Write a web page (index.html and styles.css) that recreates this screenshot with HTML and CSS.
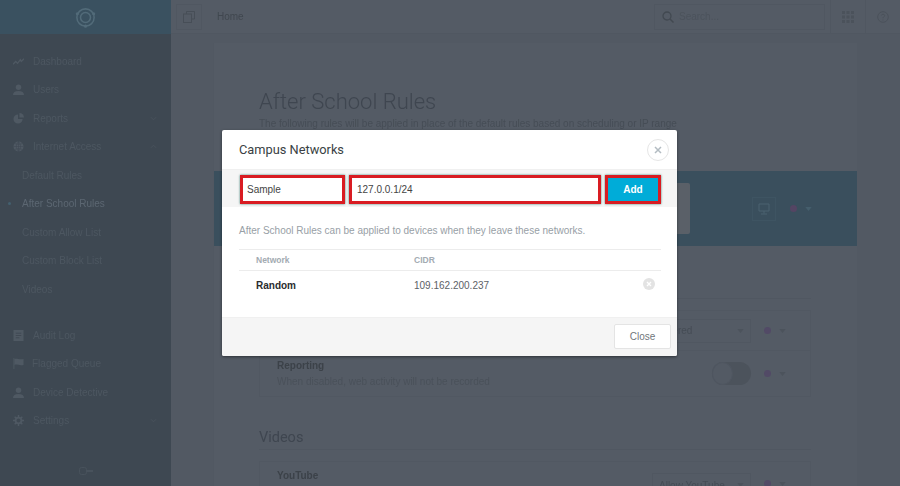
FILE: index.html
```html
<!DOCTYPE html>
<html lang="en">
<head>
<meta charset="utf-8">
<title>Campus Networks</title>
<link rel="stylesheet" href="styles.css">
</head>
<body>
<div class="app">
  <aside class="sidebar">
    <div class="brand">
      <svg class="logo" viewBox="0 0 24 24" width="23" height="23"><circle cx="12" cy="12" r="9" fill="none" stroke="#526b79" stroke-width="1.600"/><circle cx="12" cy="12" r="5.200" fill="none" stroke="#526b79" stroke-width="1.600"/><circle cx="3.500" cy="8" r="1.600" fill="#526b79"/><circle cx="20.500" cy="8" r="1.600" fill="#526b79"/><circle cx="12" cy="21" r="1.600" fill="#526b79"/></svg>
    </div>
    <nav class="nav">
      <a class="nav-row"><svg class="nav-icon" viewBox="0 0 12 12"><path d="M0 9l3-3 2 2 3-4 1 2 3-3" fill="none" stroke="#4f5963" stroke-width="1.400"/></svg>Dashboard</a>
      <a class="nav-row"><svg class="nav-icon" viewBox="0 0 12 12"><circle cx="6" cy="3.500" r="3" fill="#4f5963"/><path d="M0 12c0-3 2-4.500 6-4.500s6 1.500 6 4.500z" fill="#4f5963"/></svg>Users</a>
      <a class="nav-row"><svg class="nav-icon" viewBox="0 0 12 12"><path d="M5.500 1.500a5 5 0 1 0 5 5h-5z" fill="#4f5963"/><path d="M7 0a5 5 0 0 1 5 5H7z" fill="#4f5963"/></svg>Reports<svg class="chev" viewBox="0 0 8 5"><path d="M1 1l3 3 3-3" fill="none" stroke="#4a545e"/></svg></a>
      <a class="nav-row"><svg class="nav-icon" viewBox="0 0 12 12"><circle cx="6" cy="6" r="5.500" fill="#4f5963"/><path d="M0.500 6h11M6 .5v11M2 2.800c2.500 1 5.500 1 8 0M2 9.200c2.500-1 5.500-1 8 0M6 .5C3 4 3 8 6 11.500 9 8 9 4 6 .5" fill="none" stroke="#3e4852" stroke-width=".6"/></svg>Internet Access<svg class="chev" viewBox="0 0 8 5"><path d="M1 4l3-3 3 3" fill="none" stroke="#4a545e"/></svg></a>
      <a class="nav-row sub">Default Rules</a>
      <a class="nav-row sub active"><span class="bullet"></span>After School Rules</a>
      <a class="nav-row sub">Custom Allow List</a>
      <a class="nav-row sub">Custom Block List</a>
      <a class="nav-row sub">Videos</a>
      <a class="nav-row spaced"><svg class="nav-icon" viewBox="0 0 12 12"><path d="M.5 0h11v12H.5z" fill="#4f5963"/><path d="M3 3.500h6M3 6h6M3 8.500h4" stroke="#3e4852"/></svg>Audit Log</a>
      <a class="nav-row"><svg class="nav-icon flag" viewBox="0 0 12 12"><path d="M1 0v12" stroke="#4f5963"/><path d="M1.500 1c3-1 5 1 10 0v6.500c-5 1-7-1-10 0z" fill="#4f5963"/></svg>Flagged Queue</a>
      <a class="nav-row"><svg class="nav-icon" viewBox="0 0 12 12"><circle cx="6" cy="3.500" r="3" fill="#4f5963"/><path d="M0 12c0-3 2-4.500 6-4.500s6 1.500 6 4.500z" fill="#4f5963"/></svg>Device Detective</a>
      <a class="nav-row"><svg class="nav-icon" viewBox="0 0 12 12"><circle cx="6" cy="6" r="3.200" fill="none" stroke="#4f5963" stroke-width="2"/><path d="M6 0v2.500M6 9.500V12M0 6h2.500M9.500 6H12M1.800 1.800l1.800 1.800M8.400 8.400l1.800 1.800M1.800 10.200l1.800-1.800M8.400 3.600l1.800-1.800" stroke="#4f5963" stroke-width="1.600"/></svg>Settings<svg class="chev" viewBox="0 0 8 5"><path d="M1 1l3 3 3-3" fill="none" stroke="#4a545e"/></svg></a>
    </nav>
    <div class="side-foot"><svg viewBox="0 0 14 8" width="14" height="8"><rect x=".5" y=".5" width="7" height="7" rx="2" fill="none" stroke="#48525c"/><rect x="7" y="3" width="7" height="2" fill="#48525c"/></svg></div>
  </aside>
  <div class="main">
    <header class="topbar">
      <div class="square-btn"><svg viewBox="0 0 12 12" width="12" height="12"><rect x=".5" y="3" width="8" height="8.500" fill="none" stroke="#474e57"/><path d="M3.500 3V.5h8V8H9" fill="none" stroke="#474e57"/></svg></div>
      <span class="crumb">Home</span>
      <div class="search"><svg viewBox="0 0 12 12" width="12" height="12"><circle cx="5" cy="5" r="4" fill="none" stroke="#424951" stroke-width="1.300"/><path d="M8 8l3.500 3.500" stroke="#424951" stroke-width="1.500"/></svg><span>Search...</span></div>
      <div class="top-icon"><svg viewBox="0 0 12 12" width="12" height="12"><g fill="#4b525b"><rect width="3" height="3"/><rect x="4.500" width="3" height="3"/><rect x="9" width="3" height="3"/><rect y="4.500" width="3" height="3"/><rect x="4.500" y="4.500" width="3" height="3"/><rect x="9" y="4.500" width="3" height="3"/><rect y="9" width="3" height="3"/><rect x="4.500" y="9" width="3" height="3"/><rect x="9" y="9" width="3" height="3"/></g></svg></div>
      <div class="top-icon"><svg viewBox="0 0 12 12" width="12" height="12"><circle cx="6" cy="6" r="5.300" fill="none" stroke="#4b525b"/><path d="M4.300 4.500C4.500 2.800 7.700 2.800 7.700 4.600 7.700 5.800 6 5.800 6 7.300M6 8.500v1" fill="none" stroke="#4b525b"/></svg></div>
    </header>
    <main class="card">
      <div class="card-head">
        <h1>After School Rules</h1>
        <p>The following rules will be applied in place of the default rules based on scheduling or IP range</p>
      </div>
      <section class="band">
        <div class="band-box"></div>
        <div class="band-controls">
          <div class="monitor"><svg viewBox="0 0 12 12" width="12" height="12"><path d="M1 1h10v7H1zM6 8v2.500M3 11h6" fill="none" stroke="#4a6371"/></svg></div>
          <span class="dot"></span>
          <svg class="caret" viewBox="0 0 8 5"><path d="M0 0h8L4 5z" fill="#455e6c"/></svg>
        </div>
      </section>
      <section class="rules">
        <div class="section-rule"></div>
        <div class="panel">
          <div class="rule rule-filter">
            <div class="select">Filtered<svg class="caret" viewBox="0 0 8 5"><path d="M0 0h8L4 5z" fill="#4c535c"/></svg></div>
            <span class="dot"></span>
            <svg class="caret" viewBox="0 0 8 5"><path d="M0 0h8L4 5z" fill="#4c535c"/></svg>
          </div>
          <div class="rule rule-report">
            <div class="rule-text"><h3>Reporting</h3><p>When disabled, web activity will not be recorded</p></div>
            <div class="toggle"><span></span></div>
            <span class="dot"></span>
            <svg class="caret" viewBox="0 0 8 5"><path d="M0 0h8L4 5z" fill="#4c535c"/></svg>
          </div>
        </div>
        <h2>Videos</h2>
        <div class="panel">
          <div class="rule rule-video">
            <div class="rule-text"><h3>YouTube</h3></div>
            <div class="select">Allow YouTube<svg class="caret" viewBox="0 0 8 5"><path d="M0 0h8L4 5z" fill="#4c535c"/></svg></div>
            <span class="dot"></span>
            <svg class="caret" viewBox="0 0 8 5"><path d="M0 0h8L4 5z" fill="#4c535c"/></svg>
          </div>
        </div>
      </section>
    </main>
  </div>
</div>

<div class="modal">
  <div class="modal-head">
    <h4>Campus Networks</h4>
    <button class="modal-x" type="button"><svg viewBox="0 0 8 8" width="8" height="8"><path d="M1 1l6 6M7 1L1 7" stroke="#b3bcc2" stroke-width="1.500"/></svg></button>
  </div>
  <form class="modal-form">
    <input class="field name" value="Sample">
    <input class="field cidr" value="127.0.0.1/24">
    <button class="add" type="button">Add</button>
  </form>
  <div class="modal-body">
    <p class="hint">After School Rules can be applied to devices when they leave these networks.</p>
    <div class="table">
      <div class="t-row t-head"><span class="c1">Network</span><span class="c2">CIDR</span></div>
      <div class="t-row t-data"><span class="c1 strong">Random</span><span class="c2">109.162.200.237</span><svg class="remove" viewBox="0 0 12 12" width="12" height="12"><circle cx="6" cy="6" r="6" fill="#e3e3e3"/><path d="M4 4l4 4M8 4l-4 4" stroke="#fff" stroke-width="1.300"/></svg></div>
    </div>
  </div>
  <div class="modal-foot"><button class="close" type="button">Close</button></div>
</div>
</body>
</html>
```
FILE: styles.css
```css
* { box-sizing: border-box; }
html, body { margin: 0; height: 486px; overflow: hidden; }
body { font-family: "Liberation Sans", Arial, sans-serif; background: #535a64; position: relative; }
.app { display: flex; height: 486px; overflow: hidden; filter: blur(.45px); }

.sidebar { width: 171px; flex: none; background: #3e4852; display: flex; flex-direction: column; height: 486px; }
.brand { height: 34px; flex: none; background: #3a5160; display: flex; align-items: center; justify-content: center; }
.nav { padding-top: 12.75px; display: flex; flex-direction: column; flex: 1; }
.nav-row { height: 28.5px; display: flex; align-items: center; font-size: 10px; color: #4d5761; padding-left: 13px; position: relative; }
.nav-icon { width: 11px; height: 11px; margin-right: 9px; flex: none; }
.flag { margin-right: 8px; }
.sub { padding-left: 22px; }
.active { color: #5c6772; }
.bullet { position: absolute; left: 8px; top: 13px; width: 3px; height: 3px; border-radius: 50%; background: #44606f; }
.spaced { margin-top: 17.5px; }
.chev { position: absolute; right: 14px; top: 12px; width: 7px; height: 5px; }
.side-foot { height: 30px; display: flex; justify-content: center; padding-top: 11px; }

.main { flex: 1; min-width: 0; display: flex; flex-direction: column; background: #525963; }
.topbar { height: 34px; flex: none; display: flex; align-items: center; padding-left: 5px; border-bottom: 1px solid #505761; background: #545b65; }
.square-btn { width: 26px; height: 26px; border: 1px solid #505761; display: flex; align-items: center; justify-content: center; }
.crumb { font-size: 10px; color: #40474f; margin-left: 15px; flex: 1; }
.search { width: 171px; height: 26px; border: 1px solid #505761; display: flex; align-items: center; padding-left: 7px; gap: 5px; font-size: 10px; color: #4c535c; margin-right: 5px; }
.top-icon { width: 35px; height: 34px; border-left: 1px solid #505761; display: flex; align-items: center; justify-content: center; }

.card { margin: 9px 43px 0 42px; background: #545b65; flex: 1; border-left: 1px solid #515862; }
.card-head { padding: 46px 0 0 45px; height: 128px; }
h1 { margin: 0; font: 300 22px/26px Roboto, sans-serif; color: #3f4650; }
.card-head p { margin: 2px 0 0; font-size: 10px; line-height: 14px; color: #464d56; white-space: nowrap; }
.band { height: 75px; background: #3a4f5d; display: flex; align-items: center; justify-content: space-between; padding: 0 45px 0 45px; }
.band-box { width: 431px; height: 51px; background: #5a6068; border-radius: 2px; }
.band-controls { display: flex; align-items: center; }
.monitor { width: 24px; height: 24px; border: 1px solid #3e5462; display: flex; align-items: center; justify-content: center; margin-right: 1px; }
.band-controls .dot { background: #544563; margin-right: 8px; }
.rules { padding: 0 46px 0 45px; }
.section-rule { height: 53px; border-bottom: 1px solid #505761; margin-bottom: 11px; }
.panel { border: 1px solid #515862; }
.dot { width: 7px; height: 7px; border-radius: 50%; background: #524a66; flex: none; margin: 0 8px 0 13px; }
.caret { width: 7px; height: 4px; flex: none; }
.rule { display: flex; align-items: center; padding: 0 24px 0 17px; justify-content: flex-end; }
.rule-filter { height: 40px; border-bottom: 1px solid #515862; }
.rule-report { height: 45px; }
.rule-video { height: 60px; align-items: flex-start; padding-top: 11px; }
.rule-video .dot { margin-top: 7px; }
.rule-video > .caret { margin-top: 9px; }
.rule-video .rule-text { margin-top: -4px; }
.rule-text { flex: 1; }
h3 { margin: 0; font-size: 10px; line-height: 14px; font-weight: 700; color: #3c4249; }
.rule-text p { margin: 2px 0 0; font-size: 10px; line-height: 14px; color: #4a515a; }
.select { width: 99px; height: 24px; border: 1px solid #505761; display: flex; align-items: center; justify-content: space-between; padding: 0 6px; font-size: 10px; color: #454c55; white-space: nowrap; }
.toggle { width: 39px; height: 23px; border-radius: 12px; background: #4c535c; }
.toggle span { display: block; width: 21px; height: 23px; border-radius: 50%; background: #535a64; border: 1px solid #4f5660; }
h2 { margin: 31px 0 11px; padding-bottom: 2px; font: 400 14.500px/19px Roboto, sans-serif; color: #3f4650; border-bottom: 1px solid #505761; }

.modal { position: absolute; left: 222px; top: 130px; width: 455px; height: 226px; background: #fff; border-radius: 2px; box-shadow: 0 1px 3px rgba(0,0,0,.45); overflow: hidden; display: flex; flex-direction: column; }
.modal-head { height: 39px; flex: none; padding: 0 8px 0 17px; display: flex; align-items: center; justify-content: space-between; }
h4 { margin: 0; font: 400 12.800px/18px Roboto, sans-serif; color: #3a3f44; }
.modal-x { width: 22px; height: 22px; border: 1px solid #e6e6e6; border-radius: 50%; background: #fff; padding: 0; display: flex; align-items: center; justify-content: center; }
.modal-form { height: 38px; flex: none; background: #f5f5f5; padding: 5px 16px 4px 18px; display: flex; gap: 4px; border-top: 1px solid #f0f0f0; }
.field { height: 29px; background: #fff; border: 3px solid #d91c22; box-shadow: 0 0 2px #3f7f76; font: 10px "Liberation Sans", Arial, sans-serif; color: #444; padding: 0 4px; outline: 0; min-width: 0; border-radius: 0; }
.name { width: 105px; }
.cidr { width: 252px; padding-left: 5px; }
.add { width: 56px; height: 29px; background: #00acd8; border: 3px solid #d91c22; box-shadow: 0 0 2px #3f7f76; color: #fff; font: 700 10px "Liberation Sans", Arial, sans-serif; padding: 0; }
.modal-body { flex: 1; padding: 0 16px 0 17px; }
.hint { margin: 17px 0 12px; font-size: 10px; line-height: 13px; color: #98a0a6; white-space: nowrap; }
.t-row { display: flex; align-items: center; position: relative; }
.t-head { height: 22px; border-top: 1px solid #ececec; border-bottom: 1px solid #ececec; font-size: 8.500px; font-weight: 700; color: #a3abb2; }
.t-data { height: 29px; font-size: 10px; color: #5c6166; }
.c1 { width: 175px; padding-left: 17px; flex: none; }
.strong { font-weight: 700; color: #2a2c2e; }
.remove { position: absolute; right: 6px; top: 7px; }
.modal-foot { height: 39px; flex: none; background: #f5f5f5; border-top: 1px solid #f0f0f0; display: flex; align-items: center; justify-content: flex-end; padding: 0 6px 2px 0; }
.close { width: 57px; height: 25px; background: #fff; border: 1px solid #e4e4e4; border-radius: 2px; color: #71767b; font: 10px "Liberation Sans", Arial, sans-serif; padding: 0; }
```
